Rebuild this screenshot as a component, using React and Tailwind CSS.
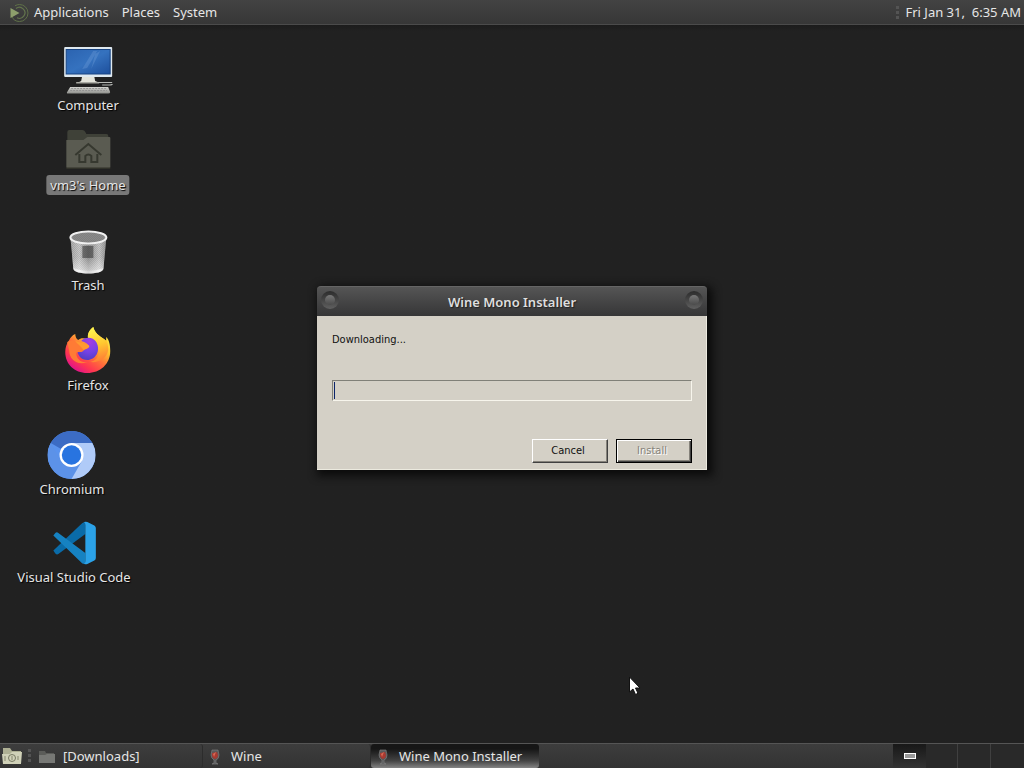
import React from "react";

function MateLogo() {
  return (
    <svg width="20" height="20" viewBox="0 0 20 20" fill="none" aria-hidden="true">
      <circle cx="10.5" cy="10" r="8.5" stroke="#5f7048" strokeWidth="1" strokeDasharray="42 12" strokeDashoffset="19" />
      <path d="M7 5.5A5.5 5.5 0 1 1 8 14.8" stroke="#63744d" strokeWidth="1.2" />
      <path d="M1.5 5v10l9-5z" fill="#8d9f6c" />
    </svg>
  );
}

function ComputerIcon() {
  return (
    <svg width="52" height="50" viewBox="0 0 52 50" aria-hidden="true">
      <defs>
        <linearGradient id="screen" x1="0" y1="0" x2="1" y2="1">
          <stop offset="0" stopColor="#2b63b0" />
          <stop offset=".5" stopColor="#3572bf" />
          <stop offset="1" stopColor="#1d4f9c" />
        </linearGradient>
        <linearGradient id="keys" x1="0" y1="0" x2="0" y2="1">
          <stop offset="0" stopColor="#d4d4d0" />
          <stop offset="1" stopColor="#8f908c" />
        </linearGradient>
      </defs>
      <path d="M20 31h12l1 5 5 2H15l4-2z" fill="#e3e3da" />
      <path d="M14 37h23v1.500H14z" fill="#a9a9a2" />
      <rect x="2" y="2" width="48" height="30" rx="1" fill="#dfe9f0" />
      <rect x="4" y="4.500" width="44" height="24.500" fill="url(#screen)" stroke="#184482" />
      <path d="M20 24l11-18h4L25 23zM33 9l5-3-9 18z" fill="#7aa7df" opacity=".3" />
      <path d="M36 37.500h14M40 40h7q3 0 3-1" fill="none" stroke="#b8bab6" strokeWidth="1.200" />
      <path d="M8 42h38l2 5q0 1.500-2 1.500H6Q4 48.500 5 47z" fill="url(#keys)" />
      <path d="M9 43.500h35M8 45.500h37" stroke="#8a8a8a" strokeWidth=".8" strokeDasharray="2 1" />
    </svg>
  );
}

function HomeFolderIcon() {
  return (
    <svg width="46" height="42" viewBox="0 0 46 42" aria-hidden="true">
      <path d="M2 3q0-2 2-2h13q2 0 3 2l1 2h20q2 0 2 2v28H2z" fill="#3f4138" />
      <path d="M1 11h17l4-3h22q1 0 1 1v29q0 1-1 1H2q-1 0-1-1z" fill="#5a5b51" />
      <path d="M1 38.500h44v1.500H1z" fill="#303129" />
      <path d="M10 26L23 15l13 11" fill="none" stroke="#36382f" strokeWidth="2" />
      <path d="M14 25v8h6v-6q3-3 6 0v6h6v-8" fill="none" stroke="#36382f" strokeWidth="2" />
    </svg>
  );
}

function TrashIcon() {
  return (
    <svg width="40" height="46" viewBox="0 0 40 46" aria-hidden="true">
      <defs>
        <linearGradient id="bin" x1="0" y1="0" x2="1" y2="0">
          <stop offset="0" stopColor="#c4c4c4" />
          <stop offset=".25" stopColor="#ececec" />
          <stop offset=".5" stopColor="#a5a5a5" />
          <stop offset=".8" stopColor="#eaeaea" />
          <stop offset="1" stopColor="#a8a8a8" />
        </linearGradient>
        <pattern id="mesh" width="2" height="2" patternUnits="userSpaceOnUse">
          <path d="M0 0h1v1H0zM1 1h1v1H1z" fill="#555" opacity=".6" />
        </pattern>
        <linearGradient id="binfade" x1="0" y1="0" x2="0" y2="1">
          <stop offset=".55" stopColor="#fff" stopOpacity="0" />
          <stop offset="1" stopColor="#fff" stopOpacity=".6" />
        </linearGradient>
      </defs>
      <path d="M2 8l3 32c1 6 29 6 30 0l3-32z" fill="url(#bin)" />
      <path d="M2 8l3 30c3 5 27 5 30 0l3-30z" fill="url(#mesh)" />
      <path d="M14 17h11v12H14z" fill="#333" opacity=".55" />
      <path d="M2 8l3 32c1 6 29 6 30 0l3-32z" fill="url(#binfade)" />
      <ellipse cx="20" cy="8.500" rx="18" ry="6" fill="#999" stroke="#f0f0f0" strokeWidth="2" />
      <ellipse cx="20" cy="8.500" rx="16" ry="5" fill="url(#mesh)" />
    </svg>
  );
}

function FirefoxIcon() {
  return (
    <svg width="48" height="48" viewBox="0 0 48 48" aria-hidden="true">
      <defs>
        <linearGradient id="fox" x1=".85" y1=".1" x2=".25" y2=".95">
          <stop offset="0" stopColor="#fff44f" />
          <stop offset=".3" stopColor="#ffc52e" />
          <stop offset=".55" stopColor="#ff7139" />
          <stop offset=".8" stopColor="#ff3750" />
          <stop offset="1" stopColor="#e31587" />
        </linearGradient>
        <radialGradient id="globe" cx=".6" cy=".2" r=".9">
          <stop offset="0" stopColor="#a43de0" />
          <stop offset=".5" stopColor="#7542e5" />
          <stop offset="1" stopColor="#4b3dbb" />
        </radialGradient>
        <linearGradient id="flame" x1=".4" y1="0" x2=".6" y2="1">
          <stop offset="0" stopColor="#fff44f" />
          <stop offset=".5" stopColor="#ffc830" />
          <stop offset="1" stopColor="#ff7a36" />
        </linearGradient>
      </defs>
      <path d="M29 0c-5 4-6 8-5 12-5-1-8-1-10 1-2-1-3-4-3-6-3 1-5 4-6 6C2 17 1 21 1 25c0 12 9 21 22 21s23-9 23-22c0-6-1-11-4-14v4C38 10 31 8 29 0z" fill="url(#fox)" />
      <path d="M29 0c-5 4-6 8-5 12 6 1 11 5 11 12 0 6-4 10-9 11 9 1 17-4 18-12 0-4-1-9-2-13v4C38 10 31 8 29 0z" fill="url(#flame)" />
      <path d="M17 14c4-5 12-4 15 1 5 9-1 18-9 18-6 0-10-5-10-10 2-1 4 0 6 0 2-2 4-2 6-3-1-3-4-5-8-6z" fill="url(#globe)" />
      <path d="M3 15c3-2 6-2 9 0l6 1c4 0 6 2 7 3 0 3-5 3-6 5-2 2-6 0-7 2 0 6 5 10 11 9-10 4-18-3-18-11z" fill="#ff7b35" />
      <path d="M11 14l7 2c4 0 6 2 7 3 0 2-4 3-6 4-1-3-5-5-8-9z" fill="#ff9a30" />
    </svg>
  );
}

function ChromiumIcon() {
  return (
    <svg width="48" height="48" viewBox="0 0 48 48" aria-hidden="true">
      <circle cx="24" cy="24" r="24" fill="#5a93ee" />
      <path d="M24 24L3.200 12A24 24 0 0 1 44.800 12H24z" fill="#3c6cc4" />
      <path d="M3.200 12A24 24 0 0 0 24 48L34.400 30 24 34 13.600 30z" fill="#5c92e8" />
      <path d="M24 12h20.800A24 24 0 0 1 24 48L34.400 30z" fill="#b0cbf8" />
      <circle cx="24" cy="24" r="12" fill="#fff" />
      <circle cx="24" cy="24" r="9.700" fill="#2874e0" />
    </svg>
  );
}

function CodeIcon() {
  return (
    <svg width="44" height="44" viewBox="0 0 44 44" aria-hidden="true">
      <path d="M1 29.500L30 2l3-1v12L6 33q-1.500 1-3-.5z" fill="#0a6ba8" />
      <path d="M1 14.500l2-2.500q1.500-1.500 3 0l27 20v11l-3-.5z" fill="#1682c2" />
      <path d="M30 42q2.500 2 5 1l7-3.500q1.500-1 1.500-2.500V7q0-1.500-1.500-2.500L35 1q-2.500-1-5 1 3-2 3 2v36q0 4-3 2z" fill="#2ba2e8" />
    </svg>
  );
}

function WineIcon() {
  return (
    <svg width="12" height="16" viewBox="0 0 12 16" aria-hidden="true">
      <path d="M3 1h6l1 5q0 4-3 5v3l2 1H3l2-1v-3Q2 9 2 6z" fill="#58595a" stroke="#858585" strokeWidth=".6" />
      <path d="M3 4l5-1 1 3q0 3-3 4-3-1-3-4z" fill="#a63a32" />
      <path d="M4 5l3-2-2 5z" fill="#d86a55" />
    </svg>
  );
}

function FolderIcon() {
  return (
    <svg width="16" height="14" viewBox="0 0 16 14" aria-hidden="true">
      <path d="M0 1h6l1 2h8v10H0z" fill="#5b5c59" />
      <path d="M0 5h6l2-1h8v9H0z" fill="#777875" />
    </svg>
  );
}

function ShowDesktopIcon() {
  return (
    <svg width="20" height="18" viewBox="0 0 20 18" aria-hidden="true">
      <path d="M1 1h7l2 3h9v13H1z" fill="#aeb094" />
      <path d="M0 7h8l2-2h10l-1 12H1z" fill="#d0d1b8" />
      <circle cx="10" cy="11" r="3.500" fill="none" stroke="#777962" />
      <path d="M10 9v4M3 9v5M16 9v4" stroke="#85876e" />
    </svg>
  );
}

function Grip() {
  return (
    <svg width="4" height="16" viewBox="0 0 4 16" aria-hidden="true">
      <path d="M0 1h3v3H0zM0 6h3v3H0zM0 11h3v3H0z" fill="#545454" />
    </svg>
  );
}

function DesktopItem({ place, icon, label, selected }) {
  return (
    <button type="button" className={`absolute flex -translate-x-1/2 flex-col items-center ${place}`}>
      <span className="flex h-[52px] items-end">{icon}</span>
      <span className={`rounded-[3px] px-1 leading-5 whitespace-nowrap text-shadow-[1px_1px_1px_#000] ${selected ? "bg-[#787878]" : ""}`}>
        {label}
      </span>
    </button>
  );
}

function TitleButton({ label }) {
  return (
    <button
      type="button"
      aria-label={label}
      className="flex size-[18px] items-center justify-center rounded-full bg-linear-to-b from-[#2c2c2c] to-[#606060]"
    >
      <span className="size-[10px] rounded-full bg-linear-to-b from-[#777] to-[#4b4b4b]" />
    </button>
  );
}

function InstallerWindow() {
  return (
    <section
      aria-labelledby="installer-title"
      className="absolute top-[261px] left-1/2 w-[390px] -translate-x-1/2 rounded-t-[4px] shadow-[3px_3px_8px_3px_#0c0c0c]"
    >
      <header className="flex h-[30px] justify-between rounded-t-[4px] border-t border-[#656565] bg-linear-to-b from-[#555] to-[#363637] px-1 pt-1">
        <TitleButton label="Window menu" />
        <h1 id="installer-title" className="leading-[22px] font-semibold text-[#dedede] text-shadow-[1px_1px_1px_#222]">
          Wine Mono Installer
        </h1>
        <TitleButton label="Close" />
      </header>
      <div className="border-r border-b border-[#eceadf] bg-[#d4d0c6] pt-4 pr-[14px] pb-[6px] pl-[15px] font-['DejaVu_Sans_Condensed','DejaVu_Sans',sans-serif] text-[11px] text-[#111]">
        <p className="h-12 leading-4" id="status">Downloading...</p>
        <div
          role="progressbar"
          aria-labelledby="status"
          aria-valuenow={0}
          className="flex h-[21px] border border-t-[#808078] border-r-[#f7f5ec] border-b-[#f7f5ec] border-l-[#808078] pl-px"
        >
          <div className="my-px w-px bg-[#0a246a]" />
        </div>
        <div className="mt-[38px] flex justify-end gap-2">
          <button
            type="button"
            className="h-6 w-[76px] border border-t-white border-r-[#404040] border-b-[#404040] border-l-white pt-px pr-1 shadow-[inset_-1px_-1px_#85827a]"
          >
            Cancel
          </button>
          <button
            type="button"
            disabled
            className="h-6 w-[76px] border border-black pt-px pr-1 text-[#85827a] shadow-[inset_1px_1px_#fff,inset_-1px_-1px_#404040,inset_-2px_-2px_#85827a] text-shadow-[1px_1px_0_#fff]"
          >
            Install
          </button>
        </div>
      </div>
    </section>
  );
}

function Task({ icon, label, active }) {
  return (
    <button
      type="button"
      className={`flex h-full w-[168px] items-center gap-2 rounded-[3px] pt-px pl-1 text-left ${
        active ? "bg-linear-to-b from-[#161616] from-20% via-[#444] via-70% to-[#858585]" : "border-r border-[#2c2c2c]"
      }`}
    >
      <span className="flex w-4 justify-center">{icon}</span>
      {label}
    </button>
  );
}

export default function App() {
  return (
    <div className="flex min-h-screen flex-col overflow-hidden bg-[#212121] font-['Noto_Sans',sans-serif] text-[13px] text-[#e6e6e6]">
      <header className="flex h-[25px] items-center justify-between border-b border-[#4b4b4b] bg-linear-to-b from-[#434343] to-[#373737] pt-px pr-[3px] pl-[9px]">
        <nav className="flex items-center gap-[13px]">
          <button type="button" className="flex items-center gap-[5px]">
            <MateLogo />
            Applications
          </button>
          <button type="button">Places</button>
          <button type="button">System</button>
        </nav>
        <div className="flex items-center gap-[6px]">
          <Grip />
          <time className="whitespace-pre">Fri Jan 31,  6:35 AM</time>
        </div>
      </header>

      <main className="relative flex-1 bg-linear-to-b from-[#1c1c1c] to-[#212121] to-[6px]">
        <DesktopItem place="left-[88px] top-[18px]" icon={<ComputerIcon />} label="Computer" />
        <DesktopItem place="left-[88px] top-[98px]" icon={<span className="pb-1"><HomeFolderIcon /></span>} label="vm3's Home" selected />
        <DesktopItem place="left-[88px] top-[198px]" icon={<TrashIcon />} label="Trash" />
        <DesktopItem place="left-[88px] top-[298px]" icon={<FirefoxIcon />} label="Firefox" />
        <DesktopItem place="left-[72px] top-[402px]" icon={<ChromiumIcon />} label="Chromium" />
        <DesktopItem place="left-[74px] top-[490px]" icon={<span className="pb-[2px]"><CodeIcon /></span>} label="Visual Studio Code" />
        <InstallerWindow />
        <svg className="absolute top-[651px] left-[628px]" width="14" height="20" viewBox="0 0 14 20" aria-hidden="true">
          <path d="M1.500 1v15l3.500-3 2.500 5.500 2.500-1.200L7.500 12H12z" fill="#fff" stroke="#111" />
        </svg>
      </main>

      <footer className="flex h-[25px] items-stretch border-t border-[#555] bg-linear-to-b from-[#3d3d3d] to-[#333]">
        <button type="button" aria-label="Show desktop" className="flex w-6 items-center justify-center">
          <ShowDesktopIcon />
        </button>
        <div className="flex w-[11px] items-center justify-center">
          <Grip />
        </div>
        <div className="flex flex-1">
          <Task icon={<FolderIcon />} label="[Downloads]" />
          <Task icon={<WineIcon />} label="Wine" />
          <Task icon={<WineIcon />} label="Wine Mono Installer" active />
        </div>
        <div className="flex">
          <button type="button" aria-label="Workspace 1" className="flex w-[33px] items-center justify-center bg-linear-to-b from-[#181818] to-[#333]">
            <span className="h-[6px] w-3 border border-white bg-[#999]" />
          </button>
          <button type="button" aria-label="Workspace 2" className="w-8 border-r border-[#404040] bg-[#292929]" />
          <button type="button" aria-label="Workspace 3" className="w-[33px] border-r border-[#404040] bg-[#292929]" />
          <button type="button" aria-label="Workspace 4" className="w-[33px] bg-[#292929]" />
        </div>
      </footer>
    </div>
  );
}
